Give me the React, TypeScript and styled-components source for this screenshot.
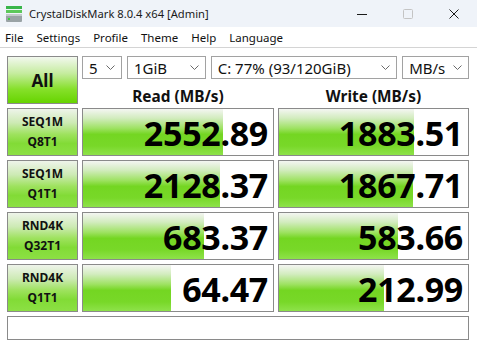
import React from 'react';
import styled, { createGlobalStyle } from 'styled-components';

const GlobalStyle = createGlobalStyle`
  html, body {
    margin: 0;
    padding: 0;
    background: #ffffff;
  }
  body {
    font-family: "Noto Sans", "DejaVu Sans", sans-serif;
    color: #000;
  }
`;

const Window = styled.div`
  width: 477px;
  height: 348px;
  display: flex;
  flex-direction: column;
  background: #ffffff;
  overflow: hidden;
`;

const TitleBar = styled.div`
  flex-shrink: 0;
  height: 27px;
  display: flex;
  align-items: center;
  background: #eff3f9;
  padding-left: 6px;
`;

const TitleText = styled.span`
  font-size: 11.2px;
  margin-left: 7px;
  color: #1a1a1a;
  flex: 1;
`;

const WinButton = styled.div`
  width: 46px;
  height: 27px;
  display: flex;
  align-items: center;
  justify-content: center;
`;

const MenuBar = styled.div`
  flex-shrink: 0;
  height: 20px;
  display: flex;
  align-items: center;
  border-bottom: 1px solid #d4d4d4;
`;

const MenuItem = styled.span`
  font-size: 11.5px;
  padding: 0 6px 0 5px;
  margin-right: 2px;
  color: #111;
`;

const Content = styled.div`
  flex-shrink: 0;
  display: grid;
  grid-template-columns: 71px 192px 191px;
  grid-template-rows: repeat(5, 48px) 24px;
  column-gap: 4px;
  row-gap: 4px;
  padding: 8px 7px 0 7px;
`;

const GreenButton = styled.div<{ $big?: boolean }>`
  box-sizing: border-box;
  border: 1px solid #8a8a8a;
  display: flex;
  flex-direction: column;
  align-items: center;
  justify-content: center;
  font-weight: 700;
  font-size: ${({ $big }) => ($big ? '17px' : '12px')};
  line-height: ${({ $big }) => ($big ? '1' : '20px')};
  color: #111;
  background: ${({ $big }) =>
    $big
      ? 'linear-gradient(to bottom, #f2f8ee 0%, #c6eca0 35%, #86e02a 70%, #66d400 100%)'
      : 'linear-gradient(to bottom, #eef4ea 0%, #cdeab4 30%, #9ee25e 55%, #82db36 75%, #8ce044 100%)'};
`;

const TopPanel = styled.div`
  grid-column: 2 / 4;
  display: flex;
  flex-direction: column;
`;

const ComboRow = styled.div`
  height: 23px;
  display: flex;
  gap: 5px;
`;

const Combo = styled.div<{ $w: number }>`
  box-sizing: border-box;
  width: ${({ $w }) => $w}px;
  height: 23px;
  border: 1px solid #a2a2a2;
  display: flex;
  align-items: center;
  padding: 0 6px;
  font-size: 15px;
  color: #111;
  background: #fff;
`;

const ComboText = styled.span`
  flex: 1;
  white-space: nowrap;
`;

const HeaderRow = styled.div`
  flex: 1;
  display: grid;
  grid-template-columns: 192px 191px;
  column-gap: 4px;
  align-items: end;
`;

const Header = styled.div`
  text-align: center;
  font-weight: 700;
  font-size: 15.4px;
  line-height: 16px;
  margin-bottom: -1px;
  color: #111;
`;

const Meter = styled.div`
  box-sizing: border-box;
  position: relative;
  border: 1px solid #8a8a8a;
  background: #fff;
  overflow: hidden;
`;

const MeterFill = styled.div`
  position: absolute;
  left: 0;
  top: 0;
  bottom: 0;
  background: linear-gradient(to bottom, #f4f6f2 0%, #d2ecbe 20%, #9ee262 42%, #74d622 55%, #78d828 80%, #8ee24a 100%);
`;

const MeterValue = styled.div`
  position: relative;
  height: 100%;
  display: flex;
  align-items: center;
  justify-content: flex-end;
  padding-right: 5px;
  padding-top: 1px;
  font-size: 34px;
  font-weight: 700;
  letter-spacing: -0.3px;
  color: #000;
`;

const Comment = styled.div`
  grid-column: 1 / 4;
  box-sizing: border-box;
  border: 1px solid #8a8a8a;
  background: #fff;
`;

const Chevron = () => (
  <svg width="9" height="5" viewBox="0 0 9 5">
    <path d="M0.5 0.5 L4.5 4.5 L8.5 0.5" fill="none" stroke="#6a6a6a" strokeWidth="1" />
  </svg>
);

const AppIcon = () => (
  <svg width="16" height="16" viewBox="0 0 16 16">
    <rect x="0" y="0" width="16" height="3" fill="#39b54a" />
    <rect x="0" y="4" width="16" height="3" fill="#5cc85a" />
    <rect x="0" y="8" width="16" height="8" rx="1" fill="#9aa3a6" />
    <rect x="0" y="8" width="16" height="2" fill="#c4cacc" />
    <rect x="2" y="12" width="2" height="2" fill="#3ccf3c" />
  </svg>
);

interface Row {
  name: string;
  sub: string;
  read: string;
  readFill: number;
  write: string;
  writeFill: number;
}

const rows: Row[] = [
  { name: 'SEQ1M', sub: 'Q8T1', read: '2552.89', readFill: 140, write: '1883.51', writeFill: 135 },
  { name: 'SEQ1M', sub: 'Q1T1', read: '2128.37', readFill: 137, write: '1867.71', writeFill: 134 },
  { name: 'RND4K', sub: 'Q32T1', read: '683.37', readFill: 121, write: '583.66', writeFill: 119 },
  { name: 'RND4K', sub: 'Q1T1', read: '64.47', readFill: 88, write: '212.99', writeFill: 105 },
];

const MeterCell: React.FC<{ value: string; fill: number }> = ({ value, fill }) => (
  <Meter>
    <MeterFill style={{ width: fill }} />
    <MeterValue>{value}</MeterValue>
  </Meter>
);

const App: React.FC = () => {
  return (
    <Window>
      <GlobalStyle />
      <TitleBar>
        <AppIcon />
        <TitleText>CrystalDiskMark 8.0.4 x64 [Admin]</TitleText>
        <WinButton>
          <svg width="10" height="10" viewBox="0 0 10 10">
            <path d="M0 5.5 H10" stroke="#1a1a1a" strokeWidth="1" />
          </svg>
        </WinButton>
        <WinButton>
          <svg width="10" height="10" viewBox="0 0 10 10">
            <rect x="0.5" y="0.5" width="9" height="9" rx="1" fill="none" stroke="#c4c4c4" strokeWidth="1" />
          </svg>
        </WinButton>
        <WinButton>
          <svg width="10" height="10" viewBox="0 0 10 10">
            <path d="M0.5 0.5 L9.5 9.5 M9.5 0.5 L0.5 9.5" stroke="#1a1a1a" strokeWidth="1" />
          </svg>
        </WinButton>
      </TitleBar>
      <MenuBar>
        {['File', 'Settings', 'Profile', 'Theme', 'Help', 'Language'].map((m) => (
          <MenuItem key={m}>{m}</MenuItem>
        ))}
      </MenuBar>
      <Content>
        <GreenButton $big>All</GreenButton>
        <TopPanel>
          <ComboRow>
            <Combo $w={40}>
              <ComboText>5</ComboText>
              <Chevron />
            </Combo>
            <Combo $w={79}>
              <ComboText>1GiB</ComboText>
              <Chevron />
            </Combo>
            <Combo $w={187}>
              <ComboText>C: 77% (93/120GiB)</ComboText>
              <Chevron />
            </Combo>
            <Combo $w={67}>
              <ComboText>MB/s</ComboText>
              <Chevron />
            </Combo>
          </ComboRow>
          <HeaderRow>
            <Header>Read (MB/s)</Header>
            <Header>Write (MB/s)</Header>
          </HeaderRow>
        </TopPanel>
        {rows.map((r, i) => (
          <React.Fragment key={i}>
            <GreenButton>
              <span>{r.name}</span>
              <span>{r.sub}</span>
            </GreenButton>
            <MeterCell value={r.read} fill={r.readFill} />
            <MeterCell value={r.write} fill={r.writeFill} />
          </React.Fragment>
        ))}
        <Comment />
      </Content>
    </Window>
  );
};

export default App;
